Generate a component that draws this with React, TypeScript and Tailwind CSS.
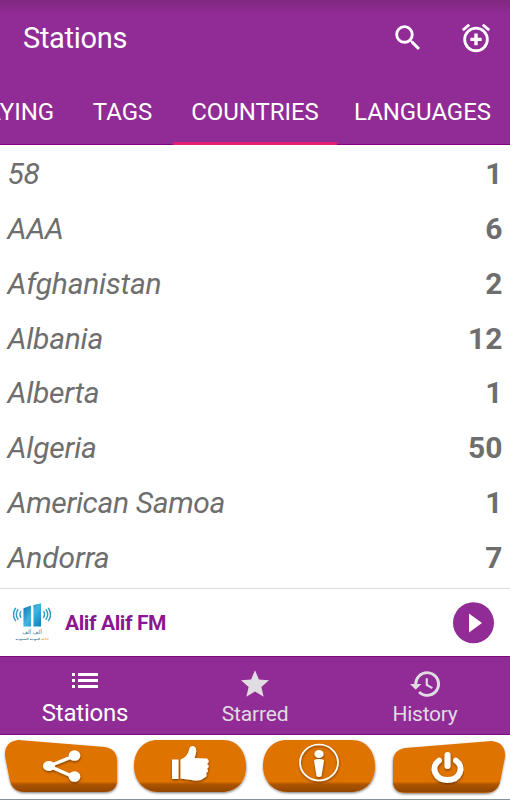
import React from 'react';

const countries: [string, string, string][] = [
  ['58', '1', 'tracking-[-0.3px]'],
  ['AAA', '6', 'tracking-[-0.3px]'],
  ['Afghanistan', '2', 'tracking-[-0.25px]'],
  ['Albania', '12', 'tracking-[-0.25px]'],
  ['Alberta', '1', 'tracking-[-0.3px]'],
  ['Algeria', '50', 'tracking-[-0.2px]'],
  ['American Samoa', '1', 'tracking-[-0.35px]'],
  ['Andorra', '7', 'tracking-[-0.15px]'],
];

function SearchIcon() {
  return (
    <svg viewBox="0 0 24 24" className="h-[34px] w-[34px]" fill="#fff">
      <path d="M15.5 14h-.79l-.28-.27A6.47 6.47 0 0 0 16 9.5 6.5 6.5 0 1 0 9.5 16c1.61 0 3.09-.59 4.23-1.57l.27.28v.79l5 4.99L20.49 19l-4.99-5zm-6 0a4.5 4.5 0 1 1 0-9 4.5 4.5 0 0 1 0 9z" />
    </svg>
  );
}

function AlarmAddIcon() {
  return (
    <svg viewBox="0 0 24 24" className="h-[34px] w-[34px]" fill="#fff">
      <path d="M7.88 3.39L6.6 1.86 2 5.71l1.29 1.53 4.59-3.85zM22 5.72l-4.6-3.86-1.29 1.53 4.6 3.86L22 5.72zM12 4a9 9 0 1 0 0 18 9 9 0 0 0 0-18zm0 16a7 7 0 1 1 0-14 7 7 0 0 1 0 14z" />
      <path d="M13.200 8.800h-2.400v3H8v2.400h2.800v3h2.400v-3H16v-2.400h-2.800z" />
    </svg>
  );
}

function StationLogo() {
  return (
    <div className="flex h-[56px] w-[56px] flex-col items-center">
      <svg viewBox="0 0 40 26" className="mt-[7px] h-[26px] w-[38px] shrink-0">
        <defs>
          <linearGradient id="bar" x1="0" y1="0" x2="1" y2="1">
            <stop offset="0" stopColor="#0870ae" />
            <stop offset=".5" stopColor="#3fb6e2" />
            <stop offset="1" stopColor="#087fbd" />
          </linearGradient>
        </defs>
        <path d="M11 6l8-3v22h-8zM21.500 2.500l8-2v24.500h-8z" fill="url(#bar)" />
        <g fill="none" stroke="#2d9ac9" strokeWidth="1.500">
          <path d="M8.500 9q-2.500 3 0 7M5.500 7q-4 5 0 11M3 5.500q-5 7 0 14M32 9q2.500 3 0 7M34.500 7q4 5 0 11M37 5.500q5 7 0 14" />
        </g>
      </svg>
      <span dir="rtl" className="mt-[1px] font-['DejaVu_Sans',sans-serif] text-[5.500px] leading-[7px] text-[#36799c]">ألف ألف</span>
      <span dir="rtl" className="whitespace-nowrap font-['DejaVu_Sans',sans-serif] text-[3px] font-bold leading-[6px] text-[#3c7995]"><span className="text-[#f29a35]">إذاعة</span> المهنية السعودية</span>
    </div>
  );
}

function ActionButton({ shape, transform, children }: { shape: string; transform?: string; children: React.ReactNode }) {
  const id = React.useId();
  return (
    <svg viewBox="0 0 120 64" className="h-[64px] w-[120px] shrink-0">
      <defs>
        <clipPath id={id}><path d={shape} transform={transform} /></clipPath>
        <linearGradient id={id + 'g'} x1="0" y1="0" x2="0" y2="1">
          <stop offset="0" stopColor="#df7300" />
          <stop offset=".25" stopColor="#ad5400" />
          <stop offset="1" stopColor="#8f4500" />
        </linearGradient>
        <filter id={id + 's'} x="-10%" y="-10%" width="120%" height="130%">
          <feDropShadow dx="0.3" dy="1.200" stdDeviation="0.8" floodColor="#000" floodOpacity=".5" />
        </filter>
      </defs>
      <path d={shape} transform={transform} fill="#df7300" filter={`url(#${id}s)`} />
      <rect y="46.500" width="120" height="11" fill={`url(#${id}g)`} clipPath={`url(#${id})`} />
      <g filter={`url(#${id}s)`}>{children}</g>
    </svg>
  );
}

const pill = 'M28 5H93C108 5 116 17 116 32C116 47 106 57 91 57H29C14 57 4 46 4 31C4 15 14 5 28 5Z';
const slanted = 'M18 5L105 12Q117 14 117 26V45Q117 57 104 57H25Q12 57 9.500 44L5 21Q4 7 18 5Z';

export default function App() {
  return (
    <div className="flex h-[800px] w-[510px] flex-col overflow-hidden bg-white font-[Roboto,sans-serif]">
      <header className="h-[145px] shrink-0 bg-[#912b96] bg-[linear-gradient(#80287f_0,#912b96_14px)] text-white shadow-[inset_0_-1px_#830080]">
        <div className="flex h-[76px] items-center pl-[23px] pr-[17px]">
          <h1 className="grow text-[29px] font-normal leading-[34px] tracking-[-0.3px]">Stations</h1>
          <SearchIcon />
          <div className="ml-[34px] flex"><AlarmAddIcon /></div>
        </div>
        <nav className="flex h-[69px] whitespace-nowrap text-[24px] leading-[72px] tracking-[-0.05px]">
          <div className="flex w-[72px] shrink-0 justify-end pr-[18px]">PLAYING</div>
          <div className="w-[101px] shrink-0 text-center">TAGS</div>
          <div className="w-[164px] shrink-0 border-b-3 border-[#e3206f] text-center">COUNTRIES</div>
          <div className="w-[171px] shrink-0 text-center">LANGUAGES</div>
        </nav>
      </header>

      <main className="h-[443px] shrink-0 pt-[1.400px] text-[#6e6e6e]">
        {countries.map(([name, count, tracking]) => (
          <div key={name} className="flex h-[54.8px] items-center justify-between pl-[7.500px] pr-[7.500px] text-[30px]">
            <span className={`italic ${tracking}`}>{name}</span>
            <span className="font-bold">{count}</span>
          </div>
        ))}
      </main>

      <section className="flex h-[68px] shrink-0 items-center border-t border-[#dcdcdc] pl-[4px] pr-[16px]">
        <StationLogo />
        <span className="ml-[5px] mt-[2px] grow text-[21px] font-bold tracking-[-0.4px] text-[#8a1790]">Alif Alif FM</span>
        <svg viewBox="0 0 42 42" className="h-[42px] w-[42px]">
          <circle cx="21.500" cy="20.800" r="20.500" fill="#912b96" />
          <path d="M17 11.500v19L30 21z" fill="#fff" />
        </svg>
      </section>

      <nav className="grid h-[79px] shrink-0 grid-cols-3 border-y border-[#7d0b7c] bg-[#912b96] text-[#e0dce1]">
        <div className="flex flex-col items-center text-white">
          <svg viewBox="0 0 26 16" className="mt-[16px] h-[16px] w-[26px]" fill="currentColor">
            <path d="M0 0h3v3H0zM6 0h20v3H6zM0 6h3v3H0zM6 6h20v3H6zM0 12h3v3H0zM6 12h20v3H6z" />
          </svg>
          <span className="mt-[10px] text-[24px] leading-[28px] tracking-[-0.2px]">Stations</span>
        </div>
        <div className="flex flex-col items-center">
          <svg viewBox="2 2 20 19" className="mt-[13px] h-[27px] w-[28px]" fill="currentColor">
            <path d="M12 17.270L18.180 21l-1.640-7.030L22 9.240l-7.190-.61L12 2 9.190 8.630 2 9.240l5.460 4.730L5.820 21z" />
          </svg>
          <span className="mt-[5px] text-[21px] leading-[24px] tracking-[-0.15px]">Starred</span>
        </div>
        <div className="flex flex-col items-center">
          <svg viewBox="1 3 21 18" className="mt-[14px] h-[26px] w-[30px]" fill="currentColor">
            <path d="M13 3a9 9 0 0 0-9 9H1l3.890 3.890.07.14L9 12H6a7 7 0 1 1 7 7c-1.930 0-3.680-.79-4.940-2.060l-1.420 1.420A9 9 0 1 0 13 3zm-1 5v5l4.280 2.540.72-1.210-3.500-2.080V8z" />
          </svg>
          <span className="mt-[5px] text-[21px] leading-[24px] tracking-[-0.25px]">History</span>
        </div>
      </nav>

      <footer className="flex h-[65px] shrink-0 items-start justify-between border-b border-[#829497] pr-px">
        <ActionButton shape={slanted}>
          <path d="M49 31L74 21M49 31L74 42" stroke="#fff" strokeWidth="3.400" />
          <g fill="#fff"><ellipse cx="49" cy="31" rx="6" ry="5" /><ellipse cx="74.500" cy="20.500" rx="5.800" ry="5.200" /><ellipse cx="74.500" cy="41.500" rx="5.800" ry="5.200" /></g>
        </ActionButton>
        <ActionButton shape={pill}>
          <path d="M42 24.500h6.500v19.500h-6.500zM50.500 24.500C55 23 58 20 59.500 13Q61 10 64.500 11.500Q68 14 64.500 23L77 23.500Q80.500 26 77 29Q80.500 31 77 34Q79.500 36 76 38Q78 41 74 43Q71 46 65 45.500L50.500 43.500Z" fill="#fff" />
        </ActionButton>
        <ActionButton shape={pill}>
          <ellipse cx="60" cy="27.500" rx="19" ry="18" fill="none" stroke="#fff" strokeWidth="1.700" />
          <ellipse cx="60" cy="19" rx="4.600" ry="4" fill="#fff" />
          <path d="M55 25Q60 23 65 25L62.500 41Q60 43 57.500 41Z" fill="#fff" />
        </ActionButton>
        <ActionButton shape={slanted} transform="translate(121 1) scale(-1 1)">
          <path d="M50 25.500C41 32 46 45 58.500 45S76 32 67 25.500" fill="none" stroke="#fff" strokeWidth="5.800" strokeLinecap="round" />
          <path d="M58.500 20v11" stroke="#fff" strokeWidth="6" strokeLinecap="round" />
        </ActionButton>
      </footer>
    </div>
  );
}
